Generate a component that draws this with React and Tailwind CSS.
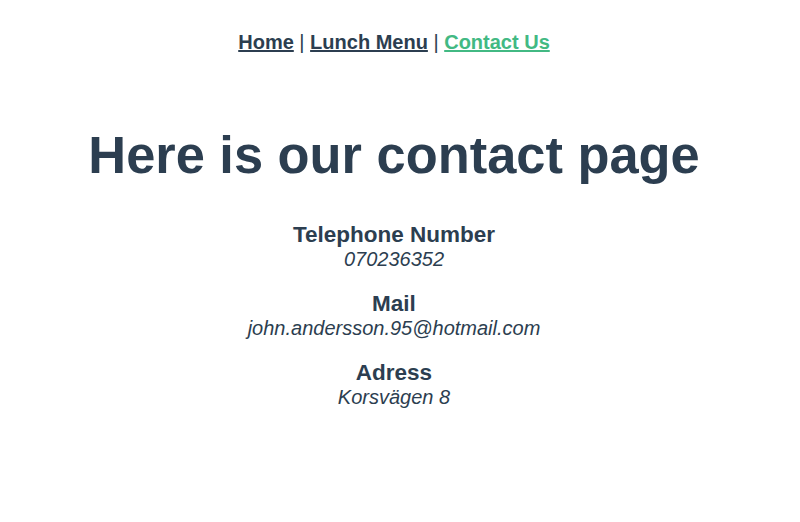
export default function App() {
  const contacts = [
    { title: "Telephone Number", value: "070236352" },
    { title: "Mail", value: "john.andersson.95@hotmail.com" },
    { title: "Adress", value: "Korsvägen 8" },
  ];

  return (
    <div className="min-h-[522px] w-[788px] bg-white text-center text-[#2c3e50] font-['Liberation_Sans',Arial,sans-serif]">
      {/* nav */}
      <nav className="pt-[31px] pb-[29px] text-[20px] leading-[23px] font-bold">
        <a href="#" className="underline text-[#2c3e50]">Home</a>
        <span className="font-normal"> | </span>
        <a href="#" className="underline text-[#2c3e50]">Lunch Menu</a>
        <span className="font-normal"> | </span>
        <a href="#" className="underline text-[#42b983]">Contact Us</a>
      </nav>

      <h1 className="mt-[40px] text-[52.4px] leading-[65px] font-bold">
        Here is our contact page
      </h1>

      <div className="mt-[34px] flex flex-col gap-[19px]">
        {contacts.map((c) => (
          <div key={c.title}>
            <h3 className="text-[22.5px] leading-[25px] font-bold">{c.title}</h3>
            <p className="text-[20px] leading-[25px] italic">{c.value}</p>
          </div>
        ))}
      </div>
    </div>
  );
}
